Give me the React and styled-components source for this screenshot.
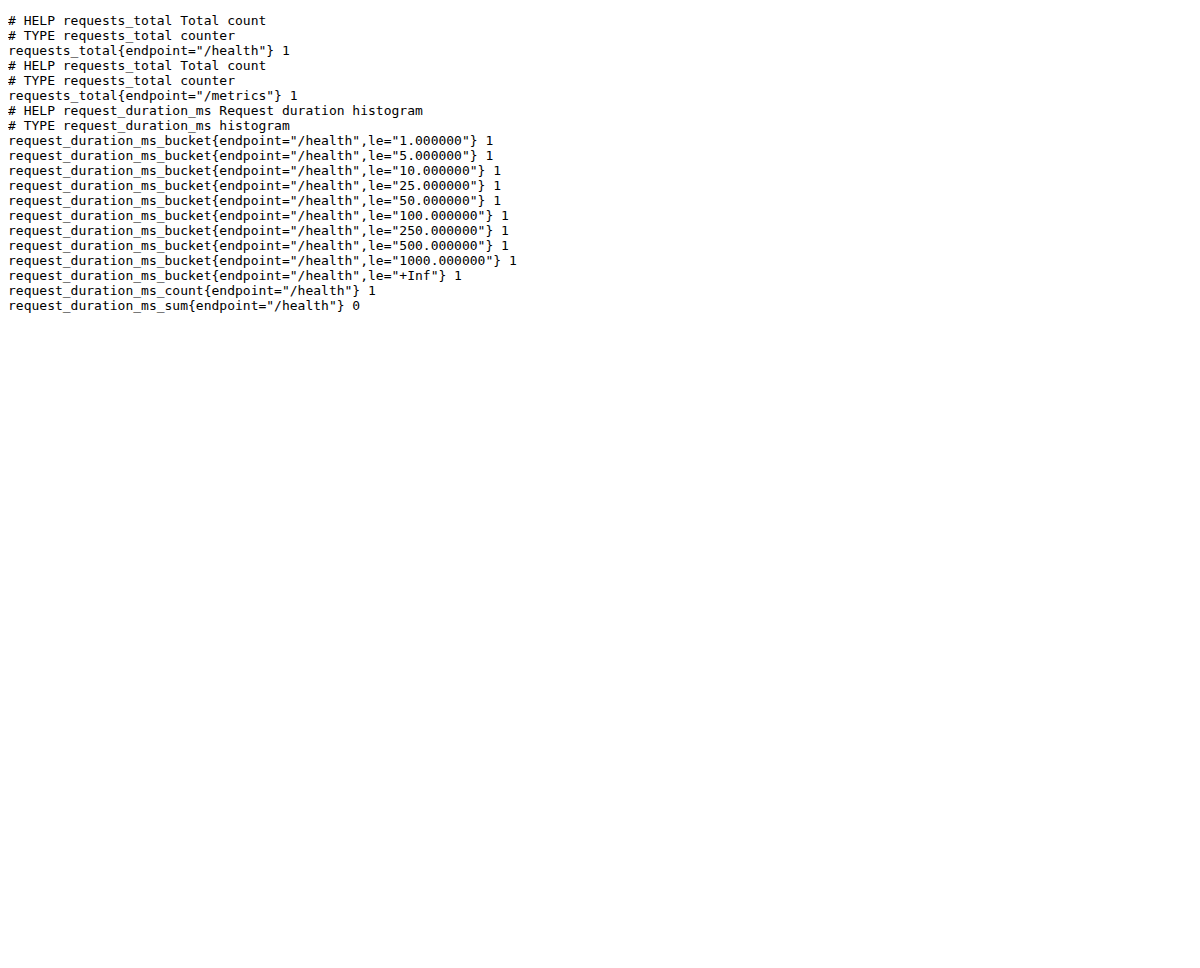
import React from 'react';
import styled, { createGlobalStyle } from 'styled-components';

const GlobalStyle = createGlobalStyle`
  body {
    margin: 8px;
    background: #fff;
  }
`;

const PlainText = styled.pre`
  margin: 5px 0 0;
  font-family: "DejaVu Sans Mono", "Liberation Mono", monospace;
  font-size: 13px;
  line-height: 15px;
  color: #000;
  white-space: pre-wrap;
  word-wrap: break-word;
`;

const metrics = [
  '# HELP requests_total Total count',
  '# TYPE requests_total counter',
  'requests_total{endpoint="/health"} 1',
  '# HELP requests_total Total count',
  '# TYPE requests_total counter',
  'requests_total{endpoint="/metrics"} 1',
  '# HELP request_duration_ms Request duration histogram',
  '# TYPE request_duration_ms histogram',
  'request_duration_ms_bucket{endpoint="/health",le="1.000000"} 1',
  'request_duration_ms_bucket{endpoint="/health",le="5.000000"} 1',
  'request_duration_ms_bucket{endpoint="/health",le="10.000000"} 1',
  'request_duration_ms_bucket{endpoint="/health",le="25.000000"} 1',
  'request_duration_ms_bucket{endpoint="/health",le="50.000000"} 1',
  'request_duration_ms_bucket{endpoint="/health",le="100.000000"} 1',
  'request_duration_ms_bucket{endpoint="/health",le="250.000000"} 1',
  'request_duration_ms_bucket{endpoint="/health",le="500.000000"} 1',
  'request_duration_ms_bucket{endpoint="/health",le="1000.000000"} 1',
  'request_duration_ms_bucket{endpoint="/health",le="+Inf"} 1',
  'request_duration_ms_count{endpoint="/health"} 1',
  'request_duration_ms_sum{endpoint="/health"} 0',
];

function App() {
  return (
    <>
      <GlobalStyle />
      <PlainText>{metrics.join('\n')}</PlainText>
    </>
  );
}

export default App;
